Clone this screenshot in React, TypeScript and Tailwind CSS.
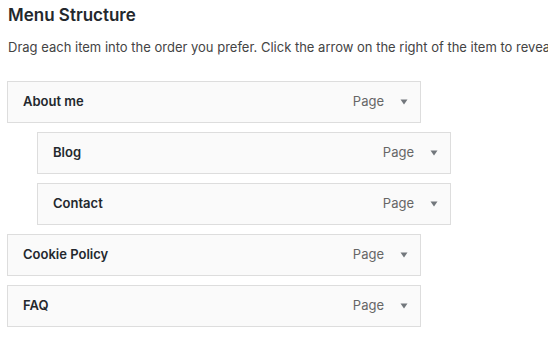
import React from 'react';

type MenuItem = {
  title: string;
  depth: number;
};

const items: MenuItem[] = [
  { title: 'About me', depth: 0 },
  { title: 'Blog', depth: 1 },
  { title: 'Contact', depth: 1 },
  { title: 'Cookie Policy', depth: 0 },
  { title: 'FAQ', depth: 0 },
];

function Caret() {
  return (
    <svg width="8" height="6" viewBox="0 0 8 6" className="block">
      <path d="M0.5 0.5 L7.5 0.5 L4 5.5 Z" fill="#72777c" />
    </svg>
  );
}

export default function App() {
  return (
    <div
      className="min-h-[351px] w-[548px] overflow-hidden bg-white px-[7px] pt-[5px] text-[#23282d]"
      style={{ fontFamily: 'Inter, "Noto Sans", sans-serif' }}
    >
      <h3 className="ml-px text-[17px] font-semibold leading-[21px] text-[#23282d]">Menu Structure</h3>
      <p className="ml-px mt-[12px] whitespace-nowrap text-[13px] leading-[19px] text-[#444]">
        Drag each item into the order you prefer. Click the arrow on the right of the item to reveal additional configuration options.
      </p>

      <ul className="mt-[24px]">
        {items.map((item) => (
          <li
            key={item.title}
            className={
              item.depth === 1
                ? 'mb-[9px] ml-[30px] flex h-[42px] w-[414px] items-center border border-[#dddddd] bg-[#fafafa] pl-[15px] pr-[12px]'
                : 'mb-[9px] flex h-[42px] w-[414px] items-center border border-[#dddddd] bg-[#fafafa] pl-[15px] pr-[12px]'
            }
          >
            <span className="flex-1 text-[13px] font-semibold">{item.title}</span>
            <span className="text-[13px] text-[#666]">Page</span>
            <span className="ml-[16px]">
              <Caret />
            </span>
          </li>
        ))}
      </ul>
    </div>
  );
}
